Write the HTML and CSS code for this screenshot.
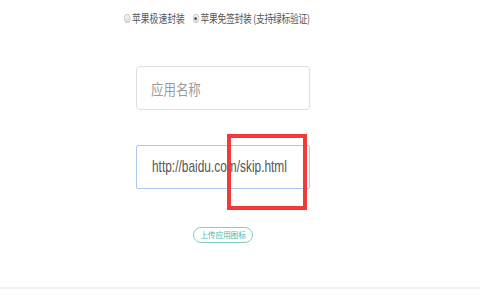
FILE: index.html
```html
<!DOCTYPE html>
<html lang="zh-CN">
<head>
<meta charset="utf-8">
<title>上传应用</title>
<link rel="stylesheet" href="styles.css">
</head>
<body>
<div class="page">
  <div class="radios">
    <div class="radio-group">
      <label class="opt"><span class="radio"></span><span class="opt-text">苹果极速封装</span></label>
      <label class="opt"><span class="radio checked"></span><span class="opt-text tight">苹果免签封装 (支持绿标验证)</span></label>
    </div>
  </div>
  <div class="field placeholder"><span class="ph-text">应用名称</span></div>
  <div class="field active"><span class="url">http://baidu.com/skip.html</span></div>
  <div class="upload-row"><span class="upload-btn">上传应用图标</span></div>
  <div class="divider"></div>
  <div class="highlight"></div>
</div>
</body>
</html>
```

FILE: styles.css
```css
html, body {
  margin: 0;
  padding: 0;
  background: #ffffff;
}
body {
  font-family: "Noto Sans CJK SC", "Liberation Sans", sans-serif;
  width: 480px;
  height: 300px;
  overflow: hidden;
}
.page {
  position: relative;
  display: flex;
  flex-direction: column;
  width: 480px;
  height: 300px;
}
.radios {
  padding-top: 12px;
  padding-left: 124px;
  height: 12px;
}
.radio-group {
  display: flex;
  align-items: center;
  gap: 9.6px;
  height: 12px;
  transform: scaleX(0.8);
  transform-origin: left center;
}
.opt {
  display: flex;
  align-items: center;
  gap: 2px;
  font-size: 11px;
  line-height: 12px;
  color: #555555;
  white-space: nowrap;
}
.opt-text.tight {
  letter-spacing: -0.35px;
}
.radio {
  display: inline-block;
  width: 6px;
  height: 7px;
  border: 1px solid #c9c9c9;
  border-radius: 50%;
  background: linear-gradient(#f5f5f5, #dcdcdc);
  position: relative;
}
.radio.checked::after {
  content: "";
  position: absolute;
  left: 1.5px;
  top: 2px;
  width: 3px;
  height: 3px;
  border-radius: 50%;
  background: #444;
}
.field {
  box-sizing: border-box;
  margin-left: 136px;
  width: 174px;
  height: 44px;
  border: 1px solid #dcdfe3;
  border-radius: 4px;
  display: flex;
  align-items: center;
  padding-left: 14px;
  white-space: nowrap;
}
.placeholder {
  margin-top: 42px;
}
.ph-text {
  display: inline-block;
  font-size: 15px;
  color: #999999;
  transform: scaleX(0.83);
  transform-origin: left center;
}
.active {
  margin-top: 35px;
  border-color: #a9c8f2;
  border-radius: 2px;
  padding-left: 15px;
}
.url {
  display: inline-block;
  font-family: "Liberation Sans", sans-serif;
  font-size: 17px;
  color: #555555;
  transform: scaleX(0.7);
  transform-origin: left center;
}
.upload-row {
  margin-top: 38px;
  margin-left: 136px;
  width: 174px;
  display: flex;
  justify-content: center;
}
.upload-btn {
  box-sizing: border-box;
  width: 60px;
  height: 16px;
  border: 1px solid #80cfc3;
  border-radius: 8px;
  font-size: 7.8px;
  line-height: 14px;
  color: #4fb4a6;
  text-align: center;
  letter-spacing: -0.2px;
}
.divider {
  margin-top: 44px;
  height: 2px;
  background: #f3f3f3;
}
.highlight {
  position: absolute;
  left: 227px;
  top: 134px;
  width: 80px;
  height: 76px;
  box-sizing: border-box;
  border: 4.5px solid #f23a3a;
}
```
